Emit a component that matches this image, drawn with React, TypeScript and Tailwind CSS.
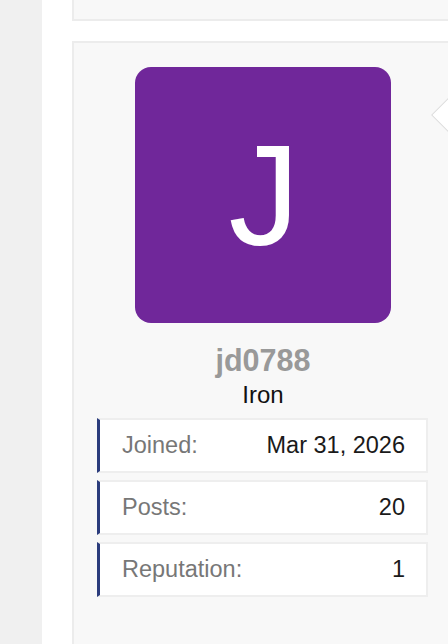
import React from 'react';

type Stat = {
    label: string;
    value: string;
};

const stats: Stat[] = [
    {label: "Joined:", value: "Mar 31, 2026"},
    {label: "Posts:", value: "20"},
    {label: "Reputation:", value: "1"},
];

function StatRow({stat}: {stat: Stat}) {
    return (
        <div className="flex items-center justify-between h-[55px] bg-white border-2 border-[#eeeeee] border-l-[3px] border-l-[#2b3c7c] pl-[22px] pr-[21px]">
            <span className="text-[23.5px] text-[#777777]">{stat.label}</span>
            <span className="text-[23.5px] text-[#1a1a1a]">{stat.value}</span>
        </div>
    );
}

function App() {
    return (
        <div className="relative flex w-[448px] h-[644px] overflow-hidden bg-white font-['Liberation_Sans',Arial,sans-serif]">
            <div className="w-[42px] h-full shrink-0 bg-[#f0f0f0]" />

            <div className="flex flex-col pl-[30px] shrink-0">
                <div className="w-[382px] h-[21px] shrink-0 bg-[#f8f8f8] border-2 border-t-0 border-[#ececec]" />

                <div className="w-[382px] mt-[20px] pb-[60px] flex flex-col items-center bg-[#f8f8f8] border-2 border-[#ececec] pt-[24px]">
                    <div className="w-[256px] h-[256px] rounded-[16px] bg-[#70279a] flex items-center justify-center">
                        <span className="text-[142px] leading-none text-white mt-[2px] ml-[2px]">J</span>
                    </div>

                    <div className="mt-[20px] text-[30.5px] leading-[35px] font-bold text-[#999999]">jd0788</div>
                    <div className="mt-[3px] text-[24px] leading-[27px] text-[#111111]">Iron</div>

                    <div className="mt-[10px] w-[331px] ml-[-1px] flex flex-col gap-[7px]">
                        {stats.map(stat => (
                            <StatRow key={stat.label} stat={stat}/>
                        ))}
                    </div>
                </div>
            </div>

            {/* arrow of the post bubble to the right */}
            <div className="absolute left-[436px] top-[103px] w-[24px] h-[24px] rotate-45 bg-white border border-[#dddddd]" />
        </div>
    );
}

export default App;
